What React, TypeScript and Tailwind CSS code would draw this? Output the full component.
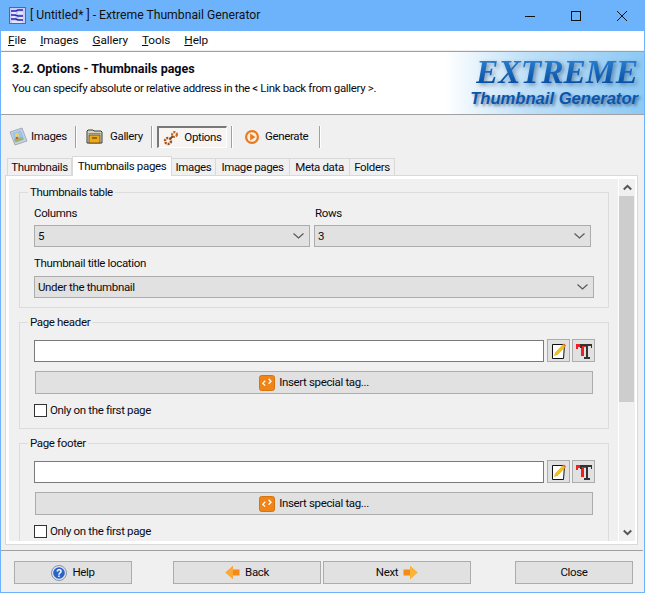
import React from "react";

const AppIcon = () => (
  <svg width="17" height="17" viewBox="0 0 17 17">
    <rect x="0.5" y="0.5" width="16" height="16" fill="#c9cdf5" stroke="#5a5ac8" />
    <path d="M2 4h5l2-1h5M2 8h4l3 1h5M2 12h5l2 1h5" stroke="#2727b5" strokeWidth="1.5" fill="none" />
    <path d="M3 6h4M9 6h5M3 10h3M10 11h4M3 15h10" stroke="#fff" strokeWidth="1.2" fill="none" />
  </svg>
);

const ImagesIcon = () => (
  <svg width="20" height="20" viewBox="0 0 20 20">
    <path d="M1 5l12-4 5 13-12 4z" fill="#c9d3e6" stroke="#8a94a8" strokeWidth="0.7" />
    <path d="M3 6l9-3 3.6 9.6-9 3z" fill="#9cc4e8" />
    <path d="M5 13l2-3 3 1 3-1 1.6 2.6-8 3z" fill="#9ab56a" />
    <circle cx="8" cy="8" r="2" fill="#f0d060" />
    <circle cx="8" cy="11" r="1.2" fill="#d9583c" />
  </svg>
);

const GalleryIcon = () => (
  <svg width="18" height="18" viewBox="0 0 18 18">
    <path d="M1 15V3l1-1h5l1 1h7l1 1v11z" fill="#d8d4c4" stroke="#3c3c36" />
    <path d="M2.5 5.5h12" stroke="#8a8878" />
    <rect x="3" y="7" width="11" height="8" fill="#f0a818" stroke="#5a4a20" strokeWidth="0.8" />
    <path d="M6 10h5" stroke="#704a00" strokeWidth="1.4" />
  </svg>
);

const OptionsIcon = () => (
  <svg width="16" height="16" viewBox="0 0 16 16">
    <circle cx="5" cy="11" r="3" fill="none" stroke="#a2501a" strokeWidth="2.4" strokeDasharray="2 1" />
    <circle cx="11.5" cy="4.5" r="2.4" fill="none" stroke="#c8641e" strokeWidth="2.2" strokeDasharray="2 1" />
    <path d="M7 9l3-3" stroke="#8a4214" strokeWidth="1.8" />
  </svg>
);

const GenerateIcon = () => (
  <svg width="14" height="14" viewBox="0 0 14 14">
    <circle cx="7" cy="7" r="7" fill="#ec7a1c" />
    <circle cx="7" cy="7" r="4.8" fill="#f6f0e4" />
    <path d="M5.2 3.600l5.200 3.400-5.200 3.400z" fill="#ec7a1c" />
  </svg>
);

const HelpIcon = () => (
  <svg width="16" height="16" viewBox="0 0 16 16">
    <circle cx="8" cy="8" r="7.5" fill="#dfe4ee" stroke="#8b93a6" />
    <circle cx="8" cy="8" r="5.8" fill="#2a62c8" />
    <text x="8" y="11.6" textAnchor="middle" fontSize="10" fontWeight="700" fill="#fff" fontFamily="Liberation Sans, sans-serif">?</text>
  </svg>
);

const LeftArrow = () => (
  <svg width="15" height="15" viewBox="0 0 15 15">
    <path d="M0.5 7.5L8 1v3.5h6.5v6H8V14z" fill="#f58a14" />
    <path d="M0.5 7.5L8 1v13z" fill="#f9a93a" />
  </svg>
);

const RightArrow = () => (
  <svg width="15" height="15" viewBox="0 0 15 15">
    <path d="M14.5 7.5L7 1v3.5H0.5v6H7V14z" fill="#f58a14" />
    <path d="M14.5 7.5L7 1v13z" fill="#f9b53a" />
  </svg>
);

const TagIcon = () => (
  <svg width="16" height="16" viewBox="0 0 16 16">
    <rect x="0.5" y="0.5" width="15" height="15" rx="2" fill="#f08416" stroke="#d87410" />
    <path d="M6.2 5.800L3.800 8.400l2.400 2.200" stroke="#fff" strokeWidth="1.3" fill="none" />
    <path d="M9.600 3.800l2.400 2.500-2.400 2.400" stroke="#fff" strokeWidth="1.3" fill="none" />
  </svg>
);

const EditIcon = () => (
  <svg width="18" height="18" viewBox="0 0 18 18">
    <path d="M2.500 2.500h12l-1 14h-11z" fill="#fff" stroke="#111" />
    <path d="M4.500 13.500l1-3 8-8.500 2 2-8 8.500z" fill="#f2c21c" stroke="#e0a010" strokeWidth="0.6" />
    <path d="M13.500 2l2 2" stroke="#e86030" strokeWidth="1.2" />
  </svg>
);

const EraseIcon = () => (
  <svg width="18" height="18" viewBox="0 0 18 18">
    <path d="M1 2h12v3H9v9H6V5H3v2H1z" fill="#f02020" />
    <path d="M5 2h12v4h-1V4h-3v11h2v2H9v-2h2V4H7v2H5z" fill="#333" />
  </svg>
);

const Chevron = () => (
  <svg width="11" height="6" viewBox="0 0 11 6" className="shrink-0">
    <path d="M0.500 0.500L5.500 5l5-4.500" fill="none" stroke="#555" strokeWidth="1.1" />
  </svg>
);

const Select = ({ value, className }: { value: string; className: string }) => (
  <div className={`flex h-[22px] items-center justify-between border border-[#acacac] bg-[#e1e1e1] pl-[3px] pr-[5px] ${className}`}>
    <span>{value}</span>
    <Chevron />
  </div>
);

const Divider = ({ className = "" }: { className?: string }) => (
  <div className={`h-[22px] w-[2px] shrink-0 border-l border-r border-l-[#a0a0a0] border-r-white ${className}`} />
);

const Tab = ({ label, width, active }: { label: string; width: string; active?: boolean }) => (
  <div
    className={
      active
        ? `z-10 -mb-px flex h-[20px] ${width} items-center justify-center whitespace-nowrap border border-b-0 border-[#d9d9d9] bg-white pb-[1px]`
        : `flex h-[17px] ${width} items-center justify-center whitespace-nowrap border border-b-0 border-l-0 border-[#d9d9d9] bg-[#f0f0f0] first:border-l`
    }
  >
    {label}
  </div>
);

const Group = ({ title, children, className }: { title: string; children: React.ReactNode; className: string }) => (
  <fieldset className={`w-[590px] border border-[#dcdcdc] pl-[14px] ${className}`}>
    <legend className="-ml-[6px] px-[2px] leading-[16px]">{title}</legend>
    {children}
  </fieldset>
);

const EditorBlock = () => (
  <>
    <div className="mt-[9px] flex items-center">
      <div className="h-[22px] w-[510px] border border-[#7a7a7a] bg-white" />
      <div className="ml-[3px] flex h-[23px] w-[23px] items-center justify-center border border-[#acacac] bg-[#e1e1e1]">
        <EditIcon />
      </div>
      <div className="ml-[2px] flex h-[23px] w-[23px] items-center justify-center border border-[#acacac] bg-[#e1e1e1]">
        <EraseIcon />
      </div>
    </div>
    <div className="ml-px mt-[9px] flex h-[23px] w-[558px] items-center justify-center gap-[4px] border border-[#acacac] bg-[#e1e1e1]">
      <TagIcon />
      <span>Insert special tag...</span>
    </div>
    <div className="mt-[9px] flex h-[14px] items-center gap-[3px]">
      <div className="h-[13px] w-[13px] border border-[#333] bg-white" />
      <span>Only on the first page</span>
    </div>
  </>
);

const FooterButton = ({ width, children, className = "" }: { width: string; children: React.ReactNode; className?: string }) => (
  <div className={`flex h-[23px] ${width} items-center justify-center gap-[5px] border border-[#acacac] bg-[#e1e1e1] ${className}`}>
    {children}
  </div>
);

export default function App() {
  return (
    <div className="flex h-[593px] w-[645px] flex-col overflow-hidden border-x border-b border-[#6db3fb] bg-[#f0f0f0] font-['Roboto',sans-serif] text-[11.500px] leading-[15px] tracking-[-0.35px] text-[#0a0a14]">
      {/* Title bar */}
      <div className="-mx-px flex h-[31px] shrink-0 items-center bg-[#6db3fb] pl-[9px]">
        <AppIcon />
        <span className="ml-[4px] text-[12.200px] tracking-normal text-[#111]">[ Untitled* ] - Extreme Thumbnail Generator</span>
        <div className="ml-auto flex items-center">
          <svg width="12" height="12" viewBox="0 0 12 12" className="mr-[34px]"><path d="M1 6.500h10" stroke="#111" /></svg>
          <svg width="12" height="12" viewBox="0 0 12 12" className="mr-[34px]"><rect x="1.500" y="1.500" width="9" height="9" fill="none" stroke="#111" /></svg>
          <svg width="12" height="12" viewBox="0 0 12 12" className="mr-[17px]"><path d="M1 1l10 10M11 1L1 11" stroke="#111" /></svg>
        </div>
      </div>
      {/* Menu */}
      <div className="flex h-[19px] shrink-0 items-center gap-[14px] bg-white pl-[7px] text-[11.800px] tracking-[-0.1px]">
        <span><u>F</u>ile</span>
        <span><u>I</u>mages</span>
        <span><u>G</u>allery</span>
        <span><u>T</u>ools</span>
        <span><u>H</u>elp</span>
      </div>
      {/* Header */}
      <div className="mt-px flex h-[64px] shrink-0 border-y border-[#a0a0a0] bg-white">
        <div className="flex-1 pl-[11px] pt-[9px]">
          <div className="text-[12.500px] font-bold leading-[16px] tracking-normal">3.2. Options - Thumbnails pages</div>
          <div className="mt-[3px] leading-[16px]">You can specify absolute or relative address in the &lt; Link back from gallery &gt;.</div>
        </div>
        <div className="flex w-[210px] flex-col items-end bg-gradient-to-r from-white from-[5%] via-[#bfe0f8] via-[45%] to-[#8cc9f4] pr-[6px] pt-[4px] tracking-normal">
          <div className="bg-gradient-to-b from-[#2c86d6] to-[#03479e] bg-clip-text font-['Liberation_Serif',serif] text-[33.500px] font-bold italic leading-[32px] text-transparent [filter:drop-shadow(2px_2px_2px_rgba(40,70,110,0.55))]">EXTREME</div>
          <div className="font-['Liberation_Sans',sans-serif] text-[16.600px] font-bold italic leading-[21px] text-[#0a55ac] [text-shadow:2px_2px_3px_rgba(30,60,100,0.6)]">Thumbnail Generator</div>
        </div>
      </div>
      {/* Toolbar */}
      <div className="flex h-[40px] shrink-0 items-center pl-[8px] pt-[3px]">
        <ImagesIcon />
        <span className="ml-[2px] w-[34px]">Images</span>
        <Divider className="ml-[10px]" />
        <span className="ml-[9px]"><GalleryIcon /></span>
        <span className="ml-[6px] w-[33px]">Gallery</span>
        <Divider className="ml-[8px]" />
        <div className="ml-[4px] flex h-[22px] w-[70px] items-center justify-center gap-[5px] border-b border-l-2 border-r border-t-2 border-[#787878] border-b-white border-r-white bg-[#f7f4f2] pt-[1px]">
          <OptionsIcon />
          <span>Options</span>
        </div>
        <Divider className="ml-[4px]" />
        <span className="ml-[12px]"><GenerateIcon /></span>
        <span className="ml-[6px] w-[46px]">Generate</span>
        <Divider className="ml-[8px]" />
      </div>
      {/* Tabs */}
      <div className="flex h-[20px] shrink-0 items-end pl-[6px]">
        <Tab label="Thumbnails" width="w-[65px]" />
        <Tab label="Thumbnails pages" width="w-[100px]" active />
        <Tab label="Images" width="w-[44px]" />
        <Tab label="Image pages" width="w-[74px]" />
        <Tab label="Meta data" width="w-[60px]" />
        <Tab label="Folders" width="w-[45px]" />
      </div>
      {/* Tab panel */}
      <div className="ml-[4px] flex h-[370px] w-[633px] shrink-0 border border-[#d9d9d9] bg-[#f0f0f0]">
        <div className="flex min-w-0 flex-1 border-[3px] border-white">
          <div className="h-full w-[610px] shrink-0 overflow-hidden border-r border-white pl-[10px] pt-[5px]">
            <Group title="Thumbnails table" className="h-[124px]">
              <div className="mt-[6px] flex">
                <div className="w-[280px]">Columns</div>
                <div className="ml-px">Rows</div>
              </div>
              <div className="mt-[4px] flex gap-[4px]">
                <Select value="5" className="w-[276px]" />
                <Select value="3" className="w-[277px]" />
              </div>
              <div className="mt-[9px]">Thumbnail title location</div>
              <Select value="Under the thumbnail" className="mt-[5px] w-[560px]" />
            </Group>
            <Group title="Page header" className="mt-[6px] h-[115px]">
              <EditorBlock />
            </Group>
            <Group title="Page footer" className="mt-[6px] h-[115px]">
              <EditorBlock />
            </Group>
          </div>
          {/* Scrollbar */}
          <div className="flex w-[16px] shrink-0 flex-col bg-[#f0f0f0]">
            <div className="flex h-[17px] shrink-0 items-center justify-center">
              <svg width="9" height="7" viewBox="0 0 9 7"><path d="M0.800 5.500L4.500 1.800l3.700 3.700" fill="none" stroke="#555" strokeWidth="2" /></svg>
            </div>
            <div className="h-[206px] w-[15px] shrink-0 bg-[#cdcdcd]" />
            <div className="mt-auto flex h-[17px] shrink-0 items-center justify-center">
              <svg width="9" height="7" viewBox="0 0 9 7"><path d="M0.800 1.500L4.500 5.200l3.700-3.700" fill="none" stroke="#555" strokeWidth="2" /></svg>
            </div>
          </div>
        </div>
      </div>
      {/* Footer */}
      <div className="mt-[5px] h-[1px] w-[642px] shrink-0 border-t border-[#a0a0a0]" />
      <div className="flex flex-1 items-start pl-[13px] pt-[10px]">
        <FooterButton width="w-[118px]"><HelpIcon /><span>Help</span></FooterButton>
        <FooterButton width="w-[148px]" className="ml-[41px]"><LeftArrow /><span>Back</span></FooterButton>
        <FooterButton width="w-[148px]" className="ml-[2px]"><span>Next</span><RightArrow /></FooterButton>
        <FooterButton width="w-[118px]" className="ml-[44px]"><span>Close</span></FooterButton>
      </div>
    </div>
  );
}
